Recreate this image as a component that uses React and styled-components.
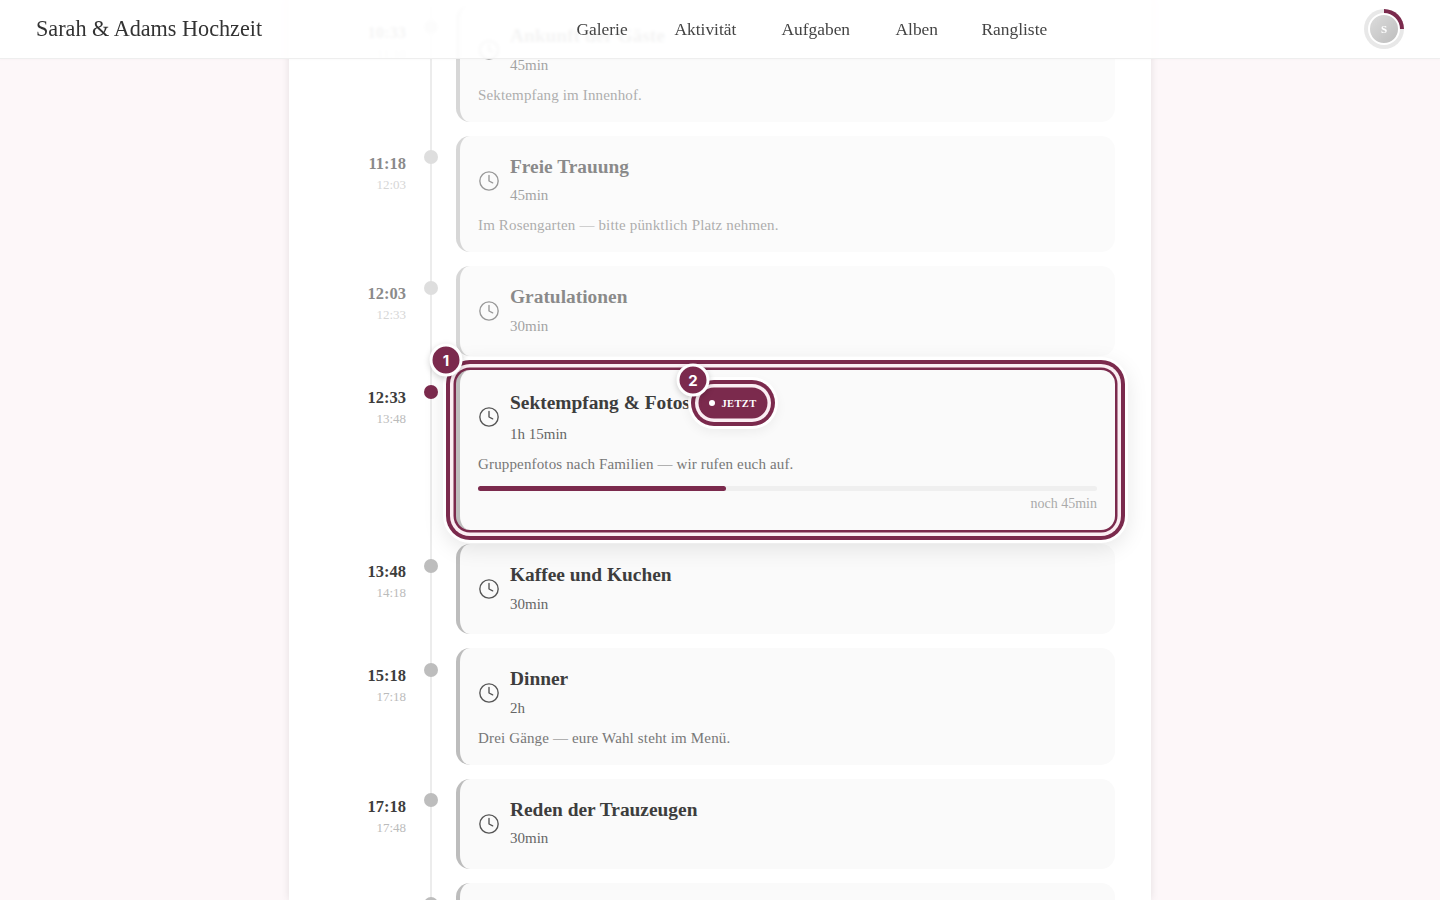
import React from "react";
import styled, { createGlobalStyle } from "styled-components";
import { Clock } from "lucide-react";

const BURGUNDY = "#7b2a4d";
const PALE = "#fbeef3";

const GlobalStyle = createGlobalStyle`
  html, body {
    margin: 0;
    height: 100%;
    overflow: hidden;
    background: #fdf7f9;
  }
  body {
    font-family: "Liberation Serif", "Times New Roman", serif;
    color: #333;
  }
`;

const Header = styled.header`
  position: fixed;
  top: 0;
  left: 0;
  right: 0;
  z-index: 10;
  height: 58px;
  padding: 0 36px;
  display: flex;
  align-items: center;
  justify-content: space-between;
  background: rgba(255, 255, 255, 0.9);
  backdrop-filter: blur(1.5px);
  border-bottom: 1px solid #eeeeee;
  box-shadow: 0 1px 2px rgba(0, 0, 0, 0.02);
`;

const Logo = styled.div`
  width: 226px;
  font-size: 22.2px;
  white-space: nowrap;
  color: #333;
`;

const Nav = styled.nav`
  display: flex;
  gap: 45px;
`;

const NavLink = styled.a`
  font-size: 17.4px;
  width: ${(p) => p.$w}px;
  white-space: nowrap;
  color: #444;
`;

const Avatar = styled.div`
  width: 40px;
  height: 40px;
  border-radius: 50%;
  display: flex;
  align-items: center;
  justify-content: center;
  background: conic-gradient(${BURGUNDY} 0 25%, #e8e8e8 25% 100%);
`;

const AvatarInner = styled.div`
  width: 28px;
  height: 28px;
  border: 2px solid #fff;
  border-radius: 50%;
  display: flex;
  align-items: center;
  justify-content: center;
  background: linear-gradient(135deg, #dcdcdc, #bdbdbd);
  color: #fff;
  font-size: 11px;
  font-weight: 700;
`;

const Page = styled.main`
  width: 862px;
  height: 900px;
  margin: 0 auto;
  box-sizing: border-box;
  padding: 5.4px 36px 0 37px;
  overflow: hidden;
  background: #fff;
  box-shadow: 0 0 8px rgba(0, 0, 0, 0.1);
`;

const Timeline = styled.div`
  position: relative;
  &::before {
    content: "";
    position: absolute;
    left: 104px;
    top: 0;
    bottom: 0;
    width: 2px;
    background: #ececec;
  }
`;

const Row = styled.div`
  position: relative;
  display: flex;
  margin-bottom: 14px;
`;

const TimeCol = styled.div`
  width: 80px;
  flex: none;
  padding-top: 18px;
  text-align: right;
  opacity: ${(p) => (p.$past ? 0.6 : 1)};
`;

const Start = styled.div`
  font-size: 16.5px;
  line-height: 20px;
  font-weight: 700;
  color: #3d3d3d;
`;

const End = styled.div`
  margin-top: 2px;
  font-size: 13px;
  line-height: 18px;
  color: #bbb;
`;

const DotCol = styled.div`
  width: 50px;
  flex: none;
  display: flex;
  justify-content: center;
  padding-top: 14.5px;
  box-sizing: border-box;
`;

const Dot = styled.span`
  position: relative;
  width: 14px;
  height: 14px;
  border-radius: 50%;
  background: ${(p) => (p.$active ? BURGUNDY : p.$past ? "#dedede" : "#bdbdbd")};
`;

const Card = styled.article`
  position: relative;
  flex: 1;
  min-width: 0;
  box-sizing: border-box;
  padding: 18px;
  background: #fafafa;
  border-left: 4px solid #bdbdbd;
  border-radius: 14px;
  ${(p) => p.$past && "opacity: 0.6;"}
  ${(p) =>
    p.$active &&
    `
    z-index: 2;
    box-shadow: 0 0 0 2.5px ${BURGUNDY}, 0 0 0 6px ${PALE}, 0 0 0 10px ${BURGUNDY},
      0 0 0 13px #fff, 0 6px 22px 12px rgba(0, 0, 0, 0.1);
  `}
`;

const Head = styled.div`
  display: flex;
  align-items: center;
  gap: 10px;
`;

const ClockIcon = styled(Clock)`
  flex: none;
  color: #555;
`;

const TitleRow = styled.div`
  display: flex;
  align-items: center;
  gap: 11px;
  min-height: ${(p) => (p.$active ? 30 : 26)}px;
`;

const Title = styled.h3`
  margin: 0;
  font-size: 19.4px;
  line-height: 26px;
  font-weight: 700;
  color: #3d3d3d;
`;

const Duration = styled.div`
  margin: 4.6px 0 0.4px;
  font-size: 15px;
  line-height: 23px;
  color: #666;
`;

const Desc = styled.p`
  margin: 8.5px 0 0;
  font-size: 15px;
  line-height: 18px;
  letter-spacing: 0.15px;
  color: #777;
`;

const NowBadge = styled.span`
  position: relative;
  display: inline-flex;
  align-items: center;
  gap: 6.5px;
  height: 26px;
  padding: 0 8px;
  border-radius: 13px;
  background: ${BURGUNDY};
  color: #fff;
  font-size: 10.5px;
  font-weight: 700;
  letter-spacing: 0.4px;
  box-shadow: 0 0 0 2.5px ${BURGUNDY}, 0 0 0 6px ${PALE}, 0 0 0 10px ${BURGUNDY},
    0 0 0 13px #fff, 0 4px 12px 12px rgba(0, 0, 0, 0.06);
  &::before {
    content: "";
    width: 6px;
    height: 6px;
    border-radius: 50%;
    background: #fff;
  }
`;

const Marker = styled.span`
  position: absolute;
  top: -10px;
  left: ${(p) => p.$left}px;
  transform: translate(-50%, -50%);
  z-index: 3;
  width: 27px;
  height: 27px;
  border: 3px solid #fff;
  border-radius: 50%;
  display: flex;
  align-items: center;
  justify-content: center;
  background: ${BURGUNDY};
  color: #fff;
  font-family: Inter, "Liberation Sans", sans-serif;
  font-size: 15px;
  font-weight: 700;
  letter-spacing: 0;
  box-shadow: 0 2px 6px rgba(0, 0, 0, 0.18);
`;

const Track = styled.div`
  margin-top: 13px;
  height: 5px;
  border-radius: 3px;
  background: #efefef;
`;

const Fill = styled.div`
  height: 100%;
  border-radius: 3px;
  background: ${BURGUNDY};
`;

const Remaining = styled.div`
  margin-top: 5.5px;
  font-size: 14px;
  line-height: 16px;
  text-align: right;
  color: #aaa;
`;

const navItems = [
  ["Galerie", 53],
  ["Aktivität", 62],
  ["Aufgaben", 69],
  ["Alben", 41],
  ["Rangliste", 68],
];

const events = [
  { start: "10:33", end: "11:18", title: "Ankunft der Gäste", dur: "45min", desc: "Sektempfang im Innenhof.", past: true },
  { start: "11:18", end: "12:03", title: "Freie Trauung", dur: "45min", desc: "Im Rosengarten — bitte pünktlich Platz nehmen.", past: true },
  { start: "12:03", end: "12:33", title: "Gratulationen", dur: "30min", past: true },
  { start: "12:33", end: "13:48", title: "Sektempfang & Fotos", dur: "1h 15min", desc: "Gruppenfotos nach Familien — wir rufen euch auf.", active: true, progress: 40, left: "noch 45min" },
  { start: "13:48", end: "14:18", title: "Kaffee und Kuchen", dur: "30min" },
  { start: "15:18", end: "17:18", title: "Dinner", dur: "2h", desc: "Drei Gänge — eure Wahl steht im Menü." },
  { start: "17:18", end: "17:48", title: "Reden der Trauzeugen", dur: "30min" },
  { start: "17:48", end: "18:33", title: "Eröffnungstanz", dur: "45min" },
];

function EventRow({ ev }) {
  return (
    <Row>
      <TimeCol $past={ev.past}>
        <Start>{ev.start}</Start>
        <End>{ev.end}</End>
      </TimeCol>
      <DotCol>
        <Dot $active={ev.active} $past={ev.past} />
      </DotCol>
      <Card $active={ev.active} $past={ev.past}>
        {ev.active && <Marker $left={-14}>1</Marker>}
        <Head>
          <ClockIcon size={22} strokeWidth={1.5} />
          <div>
            <TitleRow $active={ev.active}>
              <Title>{ev.title}</Title>
              {ev.active && (
                <NowBadge>
                  <Marker $left={-8}>2</Marker>
                  JETZT
                </NowBadge>
              )}
            </TitleRow>
            <Duration>{ev.dur}</Duration>
          </div>
        </Head>
        {ev.desc && <Desc>{ev.desc}</Desc>}
        {ev.active && (
          <>
            <Track>
              <Fill style={{ width: `${ev.progress}%` }} />
            </Track>
            <Remaining>{ev.left}</Remaining>
          </>
        )}
      </Card>
    </Row>
  );
}

export default function App() {
  return (
    <>
      <GlobalStyle />
      <Header>
        <Logo>Sarah &amp; Adams Hochzeit</Logo>
        <Nav>
          {navItems.map(([label, w]) => (
            <NavLink key={label} $w={w}>{label}</NavLink>
          ))}
        </Nav>
        <Avatar>
          <AvatarInner>S</AvatarInner>
        </Avatar>
      </Header>
      <Page>
        <Timeline>
          {events.map((ev) => (
            <EventRow key={ev.start} ev={ev} />
          ))}
        </Timeline>
      </Page>
    </>
  );
}
